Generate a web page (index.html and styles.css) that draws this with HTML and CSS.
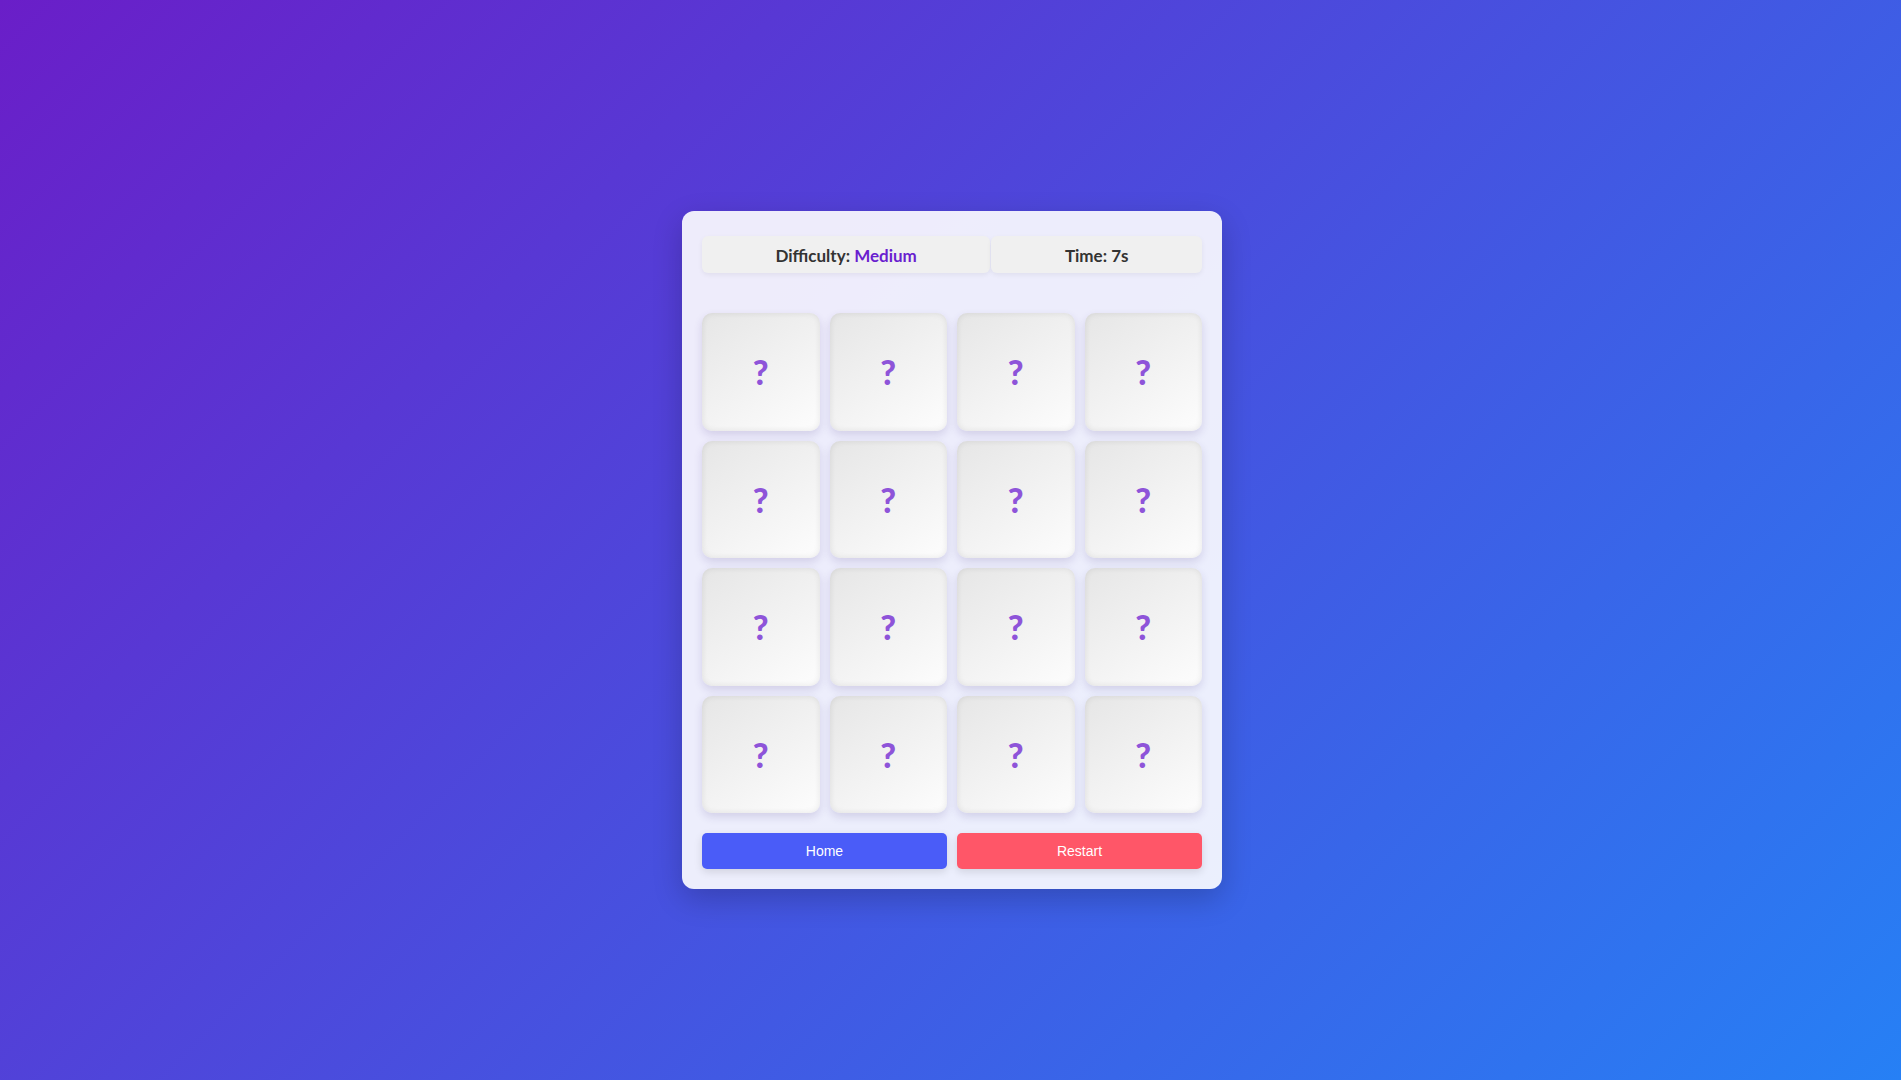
FILE: index.html
```html
<!DOCTYPE html>
<html lang="en">
<head>
<meta charset="utf-8">
<title>Memory Game</title>
<link rel="stylesheet" href="styles.css">
</head>
<body>
<main class="game">
  <div class="stats">
    <div class="stat">Difficulty: <span class="accent">Medium</span></div>
    <div class="stat">Time: 7s</div>
  </div>
  <div class="board">
    <div class="card">?</div><div class="card">?</div><div class="card">?</div><div class="card">?</div>
    <div class="card">?</div><div class="card">?</div><div class="card">?</div><div class="card">?</div>
    <div class="card">?</div><div class="card">?</div><div class="card">?</div><div class="card">?</div>
    <div class="card">?</div><div class="card">?</div><div class="card">?</div><div class="card">?</div>
  </div>
  <div class="actions">
    <button class="btn btn-home">Home</button>
    <button class="btn btn-restart">Restart</button>
  </div>
</main>
</body>
</html>
```
FILE: styles.css
```css
* { box-sizing: border-box; }
html, body { height: 100%; }
body {
  margin: 0;
  min-height: 100vh;
  background: linear-gradient(135deg, #6a1ec8 0%, #2680f5 100%);
  font-family: "Lato", "Open Sans", sans-serif;
  display: flex;
  justify-content: center;
  align-items: center;
  padding: 20px 0 0 3px;
}
.game {
  width: 540px;
  background: rgba(255, 255, 255, 0.9);
  border-radius: 12px;
  padding: 25px 20px 20px;
  box-shadow: 0 10px 30px rgba(0, 0, 0, 0.2);
}
.stats {
  display: flex;
  gap: 1px;
  margin-bottom: 40px;
}
.stat {
  flex: 1 1 auto;
  height: 37px;
  display: flex;
  align-items: center;
  justify-content: center;
  background: #f0f0f0;
  border-radius: 6px;
  box-shadow: 0 2px 5px rgba(0, 0, 0, 0.06);
  font-weight: 700;
  font-size: 17px;
  color: #333;
  white-space: pre;
  padding-top: 1px;
}
.accent { color: #6a1ecf; }
.board {
  display: grid;
  grid-template-columns: repeat(4, 1fr);
  gap: 10px;
}
.card {
  aspect-ratio: 1 / 1;
  border-radius: 10px;
  background: linear-gradient(145deg, #e6e6e6, #fdfdfd);
  box-shadow: 0 4px 9px rgba(60, 40, 120, 0.15), inset 0 0 6px rgba(0, 0, 0, 0.09);
  display: flex;
  align-items: center;
  justify-content: center;
  font-size: 34px;
  font-weight: 900;
  color: #8e54d9;
}
.actions {
  display: flex;
  gap: 10px;
  margin-top: 20px;
}
.btn {
  flex: 1;
  height: 36px;
  border: none;
  border-radius: 5px;
  color: #fff;
  font-family: "Liberation Sans", Arial, sans-serif;
  font-size: 14px;
  box-shadow: 0 3px 8px rgba(0, 0, 0, 0.12);
}
.btn-home { background: #4a5cf8; }
.btn-restart { background: #ff5668; }
```
